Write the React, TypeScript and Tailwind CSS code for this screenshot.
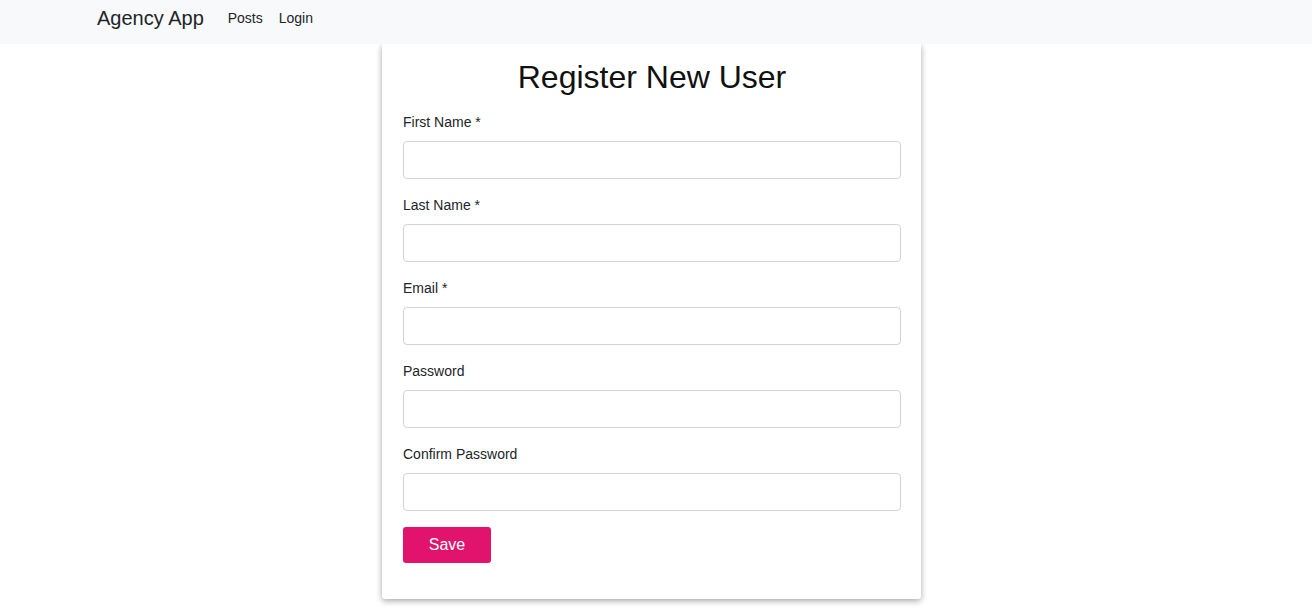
import React from "react";

const fields = ["First Name *", "Last Name *", "Email *", "Password", "Confirm Password"];

export default function App() {
  return (
    <div className="min-h-[610px] bg-white text-[#212529]" style={{ fontFamily: '"Liberation Sans", Arial, sans-serif' }}>
      <nav className="h-[44px] bg-[#f8f9fa] flex items-center pl-[97px] relative z-10">
        <span className="text-[20px] leading-none text-[#212529] mr-[24px] -mt-[8px]">Agency App</span>
        <span className="text-[14px] text-[#212529] mr-[16px] -mt-[8px]">Posts</span>
        <span className="text-[14px] text-[#212529] -mt-[8px]">Login</span>
      </nav>
      <div className="ml-[382px] w-[539px] bg-white rounded-b-[3px] shadow-[0_2px_6px_rgba(0,0,0,0.35)] pl-[21px] pr-[20px] pt-[14px] pb-[36px]">
        <h1 className="text-[32px] leading-[38px] text-center text-[#111] mb-[16px]">Register New User</h1>
        {fields.map((f) => (
          <div key={f} className="mb-[16px]">
            <label className="block text-[14px] leading-[20px] text-[#212529] mb-[9px]">{f}</label>
            <input
              type={f.includes("Password") ? "password" : "text"}
              className="block w-full h-[38px] border border-[#ced4da] rounded-[4px] bg-white outline-none"
            />
          </div>
        ))}
        <button className="w-[88px] h-[36px] bg-[#e1136d] text-white text-[16px] rounded-[3px]">Save</button>
      </div>
    </div>
  );
}
